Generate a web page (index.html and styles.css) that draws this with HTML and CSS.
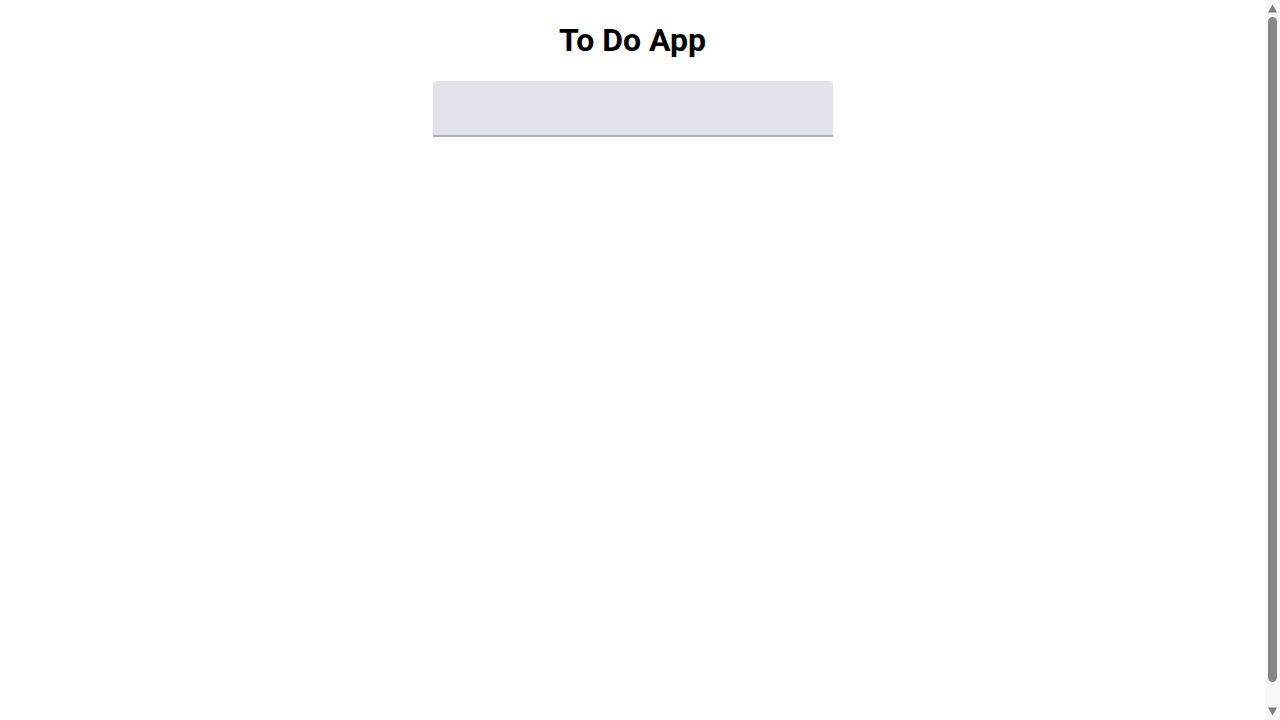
FILE: index.html
```
<!DOCTYPE html>
<html lang="en">
<head>
<meta charset="utf-8">
<title>To Do App</title>
<link rel="stylesheet" href="styles.css">
</head>
<body>
<div class="window">
  <div class="page">
    <div class="app">
      <h1 class="title">To Do App</h1>
      <div class="field">
        <input class="field-input" type="text" aria-label="New task">
      </div>
    </div>
  </div>
  <div class="scrollbar" aria-hidden="true">
    <svg class="sb-arrow" width="15" height="15" viewBox="0 0 15 15"><path d="M3 12.5 L7.5 4.5 L12 12.5 Z" fill="#7f7f7f"/></svg>
    <div class="sb-track"><div class="sb-thumb"></div></div>
    <svg class="sb-arrow" width="15" height="15" viewBox="0 0 15 15"><path d="M3 2.5 L7.5 10.5 L12 2.5 Z" fill="#7f7f7f"/></svg>
  </div>
</div>
</body>
</html>
```
FILE: styles.css
```
html, body {
  margin: 0;
  height: 100%;
  overflow: hidden;
}
body {
  font-family: Roboto, "Noto Sans", sans-serif;
  color: #000;
  background: #fff;
}
.window {
  display: flex;
  height: 100vh;
}
.page {
  flex: 1;
  min-width: 0;
  height: 100vh;
  overflow: hidden;
}
.app {
  min-height: 100vh;
  padding-bottom: 8px;
  text-align: center;
}
.title {
  font-size: 32px;
  font-weight: 700;
  margin: 0.67em 0;
}
.field {
  width: 400px;
  margin: 0 auto;
}
.field-input {
  box-sizing: border-box;
  display: block;
  width: 400px;
  height: 56px;
  margin: 0;
  padding: 0 12px;
  border: none;
  border-bottom: 2px solid #b0b2bb;
  border-radius: 4px 4px 0 0;
  background: #e0e3eb;
  font: 16px Roboto, sans-serif;
  outline: none;
}
.scrollbar {
  width: 15px;
  flex: none;
  display: flex;
  flex-direction: column;
  background: #f8f8f8;
}
.sb-arrow {
  display: block;
  flex: none;
}
.sb-track {
  flex: 1;
  display: flex;
  flex-direction: column;
  padding: 2px 3px 23px;
}
.sb-thumb {
  flex: 1;
  background: #868686;
  border-radius: 5px;
}
```
